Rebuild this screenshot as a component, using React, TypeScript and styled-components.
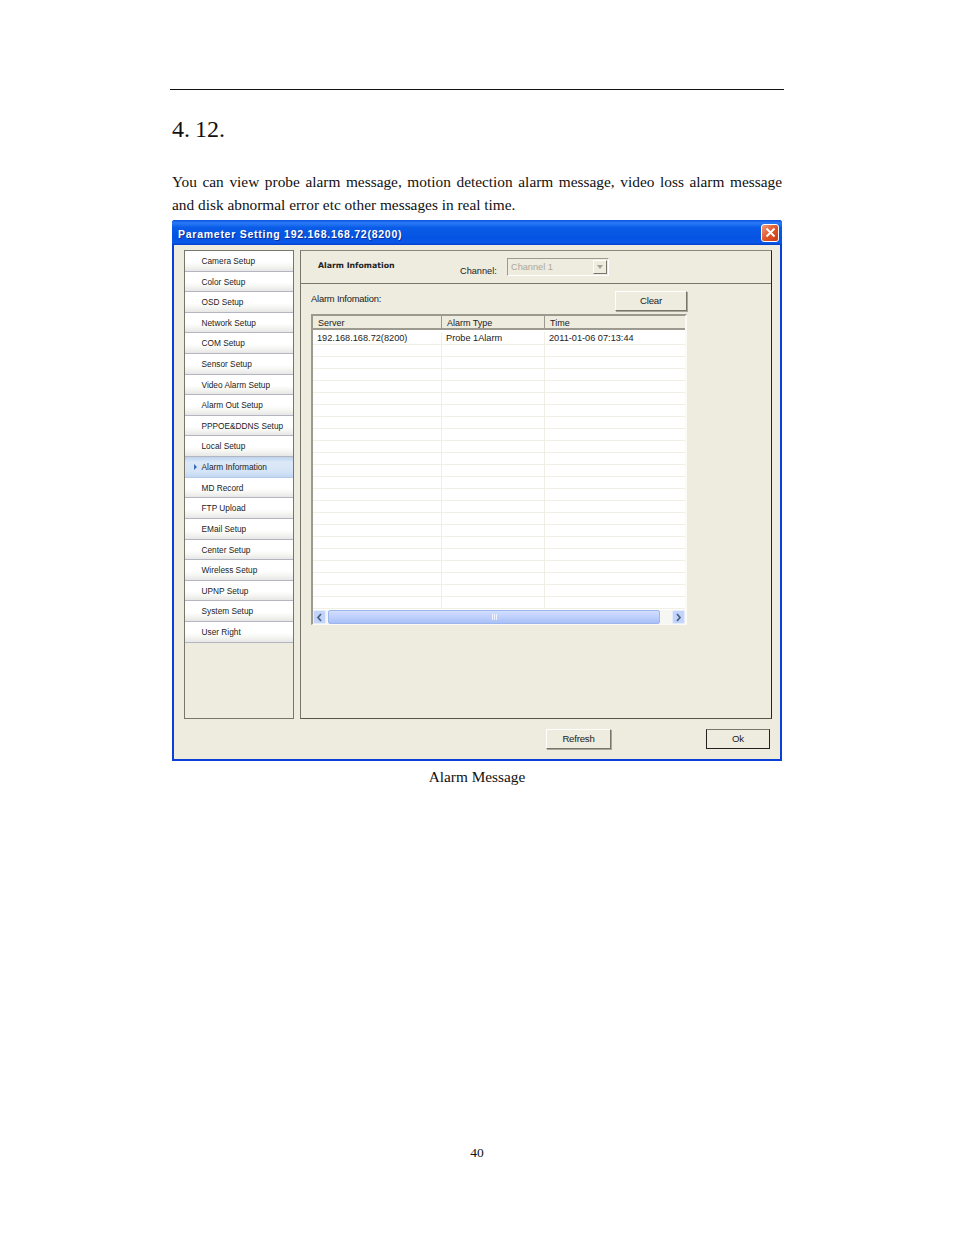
import React from "react";
import styled, { createGlobalStyle } from "styled-components";

const Global = createGlobalStyle`
  html, body { margin: 0; padding: 0; background: #fff; }
  body { font-family: "Liberation Serif", serif; color: #111; }
`;

const Page = styled.div`
  width: 954px;
  height: 1235px;
  box-sizing: border-box;
  padding: 89px 170px 0;
  display: flex;
  flex-direction: column;
`;
const Rule = styled.div`
  height: 1px;
  background: #111;
`;
const Heading = styled.h1`
  margin: 25px 0 0 2px;
  font: 400 24px/28px "Liberation Serif", serif;
  word-spacing: -1px;
`;
const Para = styled.p`
  margin: 27px 2px 0;
  font-size: 15.35px;
  line-height: 23px;
  text-align: justify;
`;
const Win = styled.div`
  margin: 4px 2px 0;
  height: 541px;
  box-sizing: border-box;
  background: #eeebdf;
  border: 2px solid #0a3fd8;
  border-top: 0;
  border-radius: 3px 3px 0 0;
  display: flex;
  flex-direction: column;
  font-family: "Liberation Sans", sans-serif;
  font-size: 8.3px;
  color: #222;
`;
const TitleBar = styled.div`
  height: 25px;
  margin: 0 -2px;
  padding: 0 3px 0 6px;
  flex: none;
  display: flex;
  align-items: center;
  justify-content: space-between;
  border-radius: 3px 3px 0 0;
  background: linear-gradient(#0a52e0 0%, #2a7af5 12%, #0a5ce8 30%, #0553e2 70%, #0a58ea 90%, #0441c8 100%);
`;
const TitleText = styled.span`
  padding-top: 2px;
  font: 700 10.5px "Liberation Sans", sans-serif;
  letter-spacing: 0.74px;
  color: #fff;
  text-shadow: 1px 1px 0 #0a2f9c;
`;
const CloseBtn = styled.span`
  width: 18px;
  height: 18px;
  box-sizing: border-box;
  display: flex;
  align-items: center;
  justify-content: center;
  border: 1px solid #fff;
  border-radius: 3px;
  background: linear-gradient(135deg, #f0a080, #e0552a 50%, #c83a14);
`;
const Body = styled.div`
  flex: 1;
  display: flex;
  gap: 6px;
  padding: 5px 8px 0 10px;
`;
const Sidebar = styled.nav`
  width: 110px;
  height: 469px;
  box-sizing: border-box;
  border: 1px solid #77756c;
`;
const NavItem = styled.div<{ $active?: boolean }>`
  height: 20.62px;
  box-sizing: border-box;
  padding: 3px 0 0 16.5px;
  position: relative;
  line-height: 14px;
  white-space: nowrap;
  background: ${(p) =>
    p.$active
      ? "linear-gradient(#bcd3ee, #dbe8f7 25%, #d6e5f6 70%, #c2d8f2)"
      : "linear-gradient(#fff 55%, #f6f6f3 75%, #e7e7e6 100%)"};
  border-bottom: 1px solid ${(p) => (p.$active ? "#b3cbe8" : "#b3b6c0")};
`;
const Arrow = styled.span`
  position: absolute;
  left: 9px;
  top: 7px;
  width: 0;
  height: 0;
  border-style: solid;
  border-width: 3px 0 3px 3px;
  border-color: transparent transparent transparent #3c6cb8;
`;
const Main = styled.section`
  width: 472px;
  height: 469px;
  box-sizing: border-box;
  border: 1px solid #77756c;
  border-top-color: #8a887c;
  border-right-color: #222;
  border-bottom-color: #55534a;
  display: flex;
  flex-direction: column;
`;
const MainHead = styled.header`
  height: 33px;
  flex: none;
  box-sizing: border-box;
  border-bottom: 1px solid #77756c;
  display: flex;
  padding-left: 17px;
`;
const HeadTitle = styled.b`
  width: 142px;
  padding-top: 9px;
  font: 700 7.8px/12px "DejaVu Sans", sans-serif;
  color: #222;
`;
const ChannelLabel = styled.span`
  width: 47px;
  padding-top: 14px;
  line-height: 12px;
  font-size: 9.2px;
`;
const Combo = styled.div`
  width: 102px;
  height: 18px;
  margin-top: 7px;
  box-sizing: border-box;
  display: flex;
  align-items: center;
  justify-content: space-between;
  padding: 0 1px 0 3px;
  border: 1px solid #9c9a8e;
  border-right-color: #fff;
  border-bottom-color: #fff;
  color: #aaa89c;
  font-size: 9.2px;
`;
const ComboBtn = styled.span`
  width: 14px;
  height: 14px;
  display: flex;
  align-items: center;
  justify-content: center;
  background: #eeebdf;
  border: 1px solid #fff;
  border-right-color: #77756c;
  border-bottom-color: #77756c;
  box-sizing: border-box;
  &::after {
    content: "";
    border-style: solid;
    border-width: 4px 3.5px 0;
    border-color: #a5a399 transparent transparent;
  }
`;
const Content = styled.div`
  width: 376px;
  margin-left: 10px;
`;
const ToolRow = styled.div`
  height: 30px;
  display: flex;
  justify-content: space-between;
  align-items: flex-start;
`;
const InfoLabel = styled.span`
  padding-top: 9px;
  line-height: 12px;
  font-size: 9.4px;
  letter-spacing: -0.2px;
`;
const Btn = styled.button<{ $w: number; $dark?: boolean; $mt?: number; $mr?: number }>`
  width: ${(p) => p.$w}px;
  height: 20px;
  margin: ${(p) => p.$mt ?? 0}px ${(p) => p.$mr ?? 0}px 0 0;
  box-sizing: border-box;
  padding: 0 0 2px;
  background: #eeebdf;
  font: 9.6px "Liberation Sans", sans-serif;
  letter-spacing: -0.2px;
  color: #222;
  border: 1px solid;
  border-color: ${(p) => (p.$dark ? "#77756c #222 #222 #222" : "#fff #77756c #77756c #fff")};
  box-shadow: ${(p) => (p.$dark ? "none" : "1px 1px 0 #a8a699")};
`;
const List = styled.div`
  height: 311px;
  box-sizing: border-box;
  background: #fff;
  border: 2px solid #9c9a8e;
  border-right: 2px solid #fbfaf5;
  border-bottom: 1px solid #fbfaf5;
  display: flex;
  flex-direction: column;
  font-size: 9.2px;
`;
const Cols = styled.div`
  display: grid;
  grid-template-columns: 129px 103px 1fr;
`;
const HeadRow = styled(Cols)`
  height: 14px;
  flex: none;
  background: #eeebdf;
  border-bottom: 2px solid #9c9a8e;
  box-sizing: border-box;
  font-size: 9px;
`;
const HeadCell = styled.div`
  padding: 2px 0 0 5px;
  line-height: 11px;
  border-right: 1px solid #9c9a8e;
  &:last-child { border-right: 0; }
`;
const Row = styled(Cols)<{ $first?: boolean }>`
  height: ${(p) => (p.$first ? 15 : 12)}px;
  padding-top: ${(p) => (p.$first ? 2 : 0)}px;
  flex: none;
  box-sizing: border-box;
  border-bottom: 1px solid #f1efe3;
`;
const Cell = styled.div`
  padding-left: 4px;
  line-height: 12px;
  white-space: nowrap;
  border-right: 1px solid #f1efe3;
  &:last-child { border-right: 0; }
`;
const ScrollBar = styled.div`
  height: 14px;
  margin-top: 1px;
  display: flex;
  align-items: stretch;
  background: #f6f6f2;
`;
const ScrollBtn = styled.span`
  width: 13px;
  display: flex;
  align-items: center;
  justify-content: center;
  background: #c3d4fb;
  border: 1px solid #e4ecfd;
  border-radius: 2px;
  box-sizing: border-box;
`;
const Thumb = styled.span`
  width: 332px;
  margin-left: 2px;
  display: flex;
  align-items: center;
  justify-content: center;
  gap: 1px;
  border-radius: 2px;
  background: linear-gradient(#d2defc, #bacdfb 60%, #a9c0f6);
  border: 1px solid #9db6ee;
  box-sizing: border-box;
`;
const Grip = styled.i`
  width: 1px;
  height: 6px;
  background: #eef3fe;
`;
const Track = styled.span`
  flex: 1;
`;
const Footer = styled.footer`
  flex: 1;
  display: flex;
  justify-content: flex-end;
  gap: 95px;
  padding-top: 10px;
`;
const Caption = styled.div`
  margin-top: 6px;
  text-align: center;
  font-size: 15.3px;
  line-height: 20px;
`;
const PageNum = styled.div`
  margin-top: 359px;
  text-align: center;
  font-size: 13.5px;
  line-height: 14px;
`;

const items = [
  "Camera Setup", "Color Setup", "OSD Setup", "Network Setup", "COM Setup", "Sensor Setup",
  "Video Alarm Setup", "Alarm Out Setup", "PPPOE&DDNS Setup", "Local Setup", "Alarm Information",
  "MD Record", "FTP Upload", "EMail Setup", "Center Setup", "Wireless Setup", "UPNP Setup",
  "System Setup", "User Right",
];

const Chevron = ({ d }: { d: string }) => (
  <svg width="7" height="9" viewBox="0 0 7 9" fill="none">
    <path d={d} stroke="#4d6185" strokeWidth="1.8" />
  </svg>
);

export default function App() {
  return (
    <Page>
      <Global />
      <Rule />
      <Heading>4. 12.</Heading>
      <Para>
        You can view probe alarm message, motion detection alarm message, video loss alarm message
        and disk abnormal error etc other messages in real time.
      </Para>
      <Win>
        <TitleBar>
          <TitleText>Parameter Setting 192.168.168.72(8200)</TitleText>
          <CloseBtn>
            <svg width="11" height="11" viewBox="0 0 11 11">
              <path d="M1.5 1.5l8 8M9.5 1.5l-8 8" stroke="#fff" strokeWidth="2" />
            </svg>
          </CloseBtn>
        </TitleBar>
        <Body>
          <Sidebar>
            {items.map((t) => (
              <NavItem key={t} $active={t === "Alarm Information"}>
                {t === "Alarm Information" && <Arrow />}
                {t}
              </NavItem>
            ))}
          </Sidebar>
          <Main>
            <MainHead>
              <HeadTitle>Alarm Infomation</HeadTitle>
              <ChannelLabel>Channel:</ChannelLabel>
              <Combo>
                Channel 1
                <ComboBtn />
              </Combo>
            </MainHead>
            <Content>
              <ToolRow>
                <InfoLabel>Alarm Infomation:</InfoLabel>
                <Btn $w={72} $mt={7}>Clear</Btn>
              </ToolRow>
              <List>
                <HeadRow>
                  <HeadCell>Server</HeadCell>
                  <HeadCell>Alarm Type</HeadCell>
                  <HeadCell>Time</HeadCell>
                </HeadRow>
                {Array.from({ length: 23 }, (_, i) => (
                  <Row key={i} $first={i === 0}>
                    <Cell>{i === 0 ? "192.168.168.72(8200)" : ""}</Cell>
                    <Cell>{i === 0 ? "Probe 1Alarm" : ""}</Cell>
                    <Cell>{i === 0 ? "2011-01-06 07:13:44" : ""}</Cell>
                  </Row>
                ))}
                <ScrollBar>
                  <ScrollBtn><Chevron d="M5 1L2 4.5L5 8" /></ScrollBtn>
                  <Thumb><Grip /><Grip /><Grip /></Thumb>
                  <Track />
                  <ScrollBtn><Chevron d="M2 1L5 4.5L2 8" /></ScrollBtn>
                </ScrollBar>
              </List>
            </Content>
          </Main>
        </Body>
        <Footer>
          <Btn $w={65}>Refresh</Btn>
          <Btn $w={64} $dark $mr={10}>Ok</Btn>
        </Footer>
      </Win>
      <Caption>Alarm Message</Caption>
      <PageNum>40</PageNum>
    </Page>
  );
}
